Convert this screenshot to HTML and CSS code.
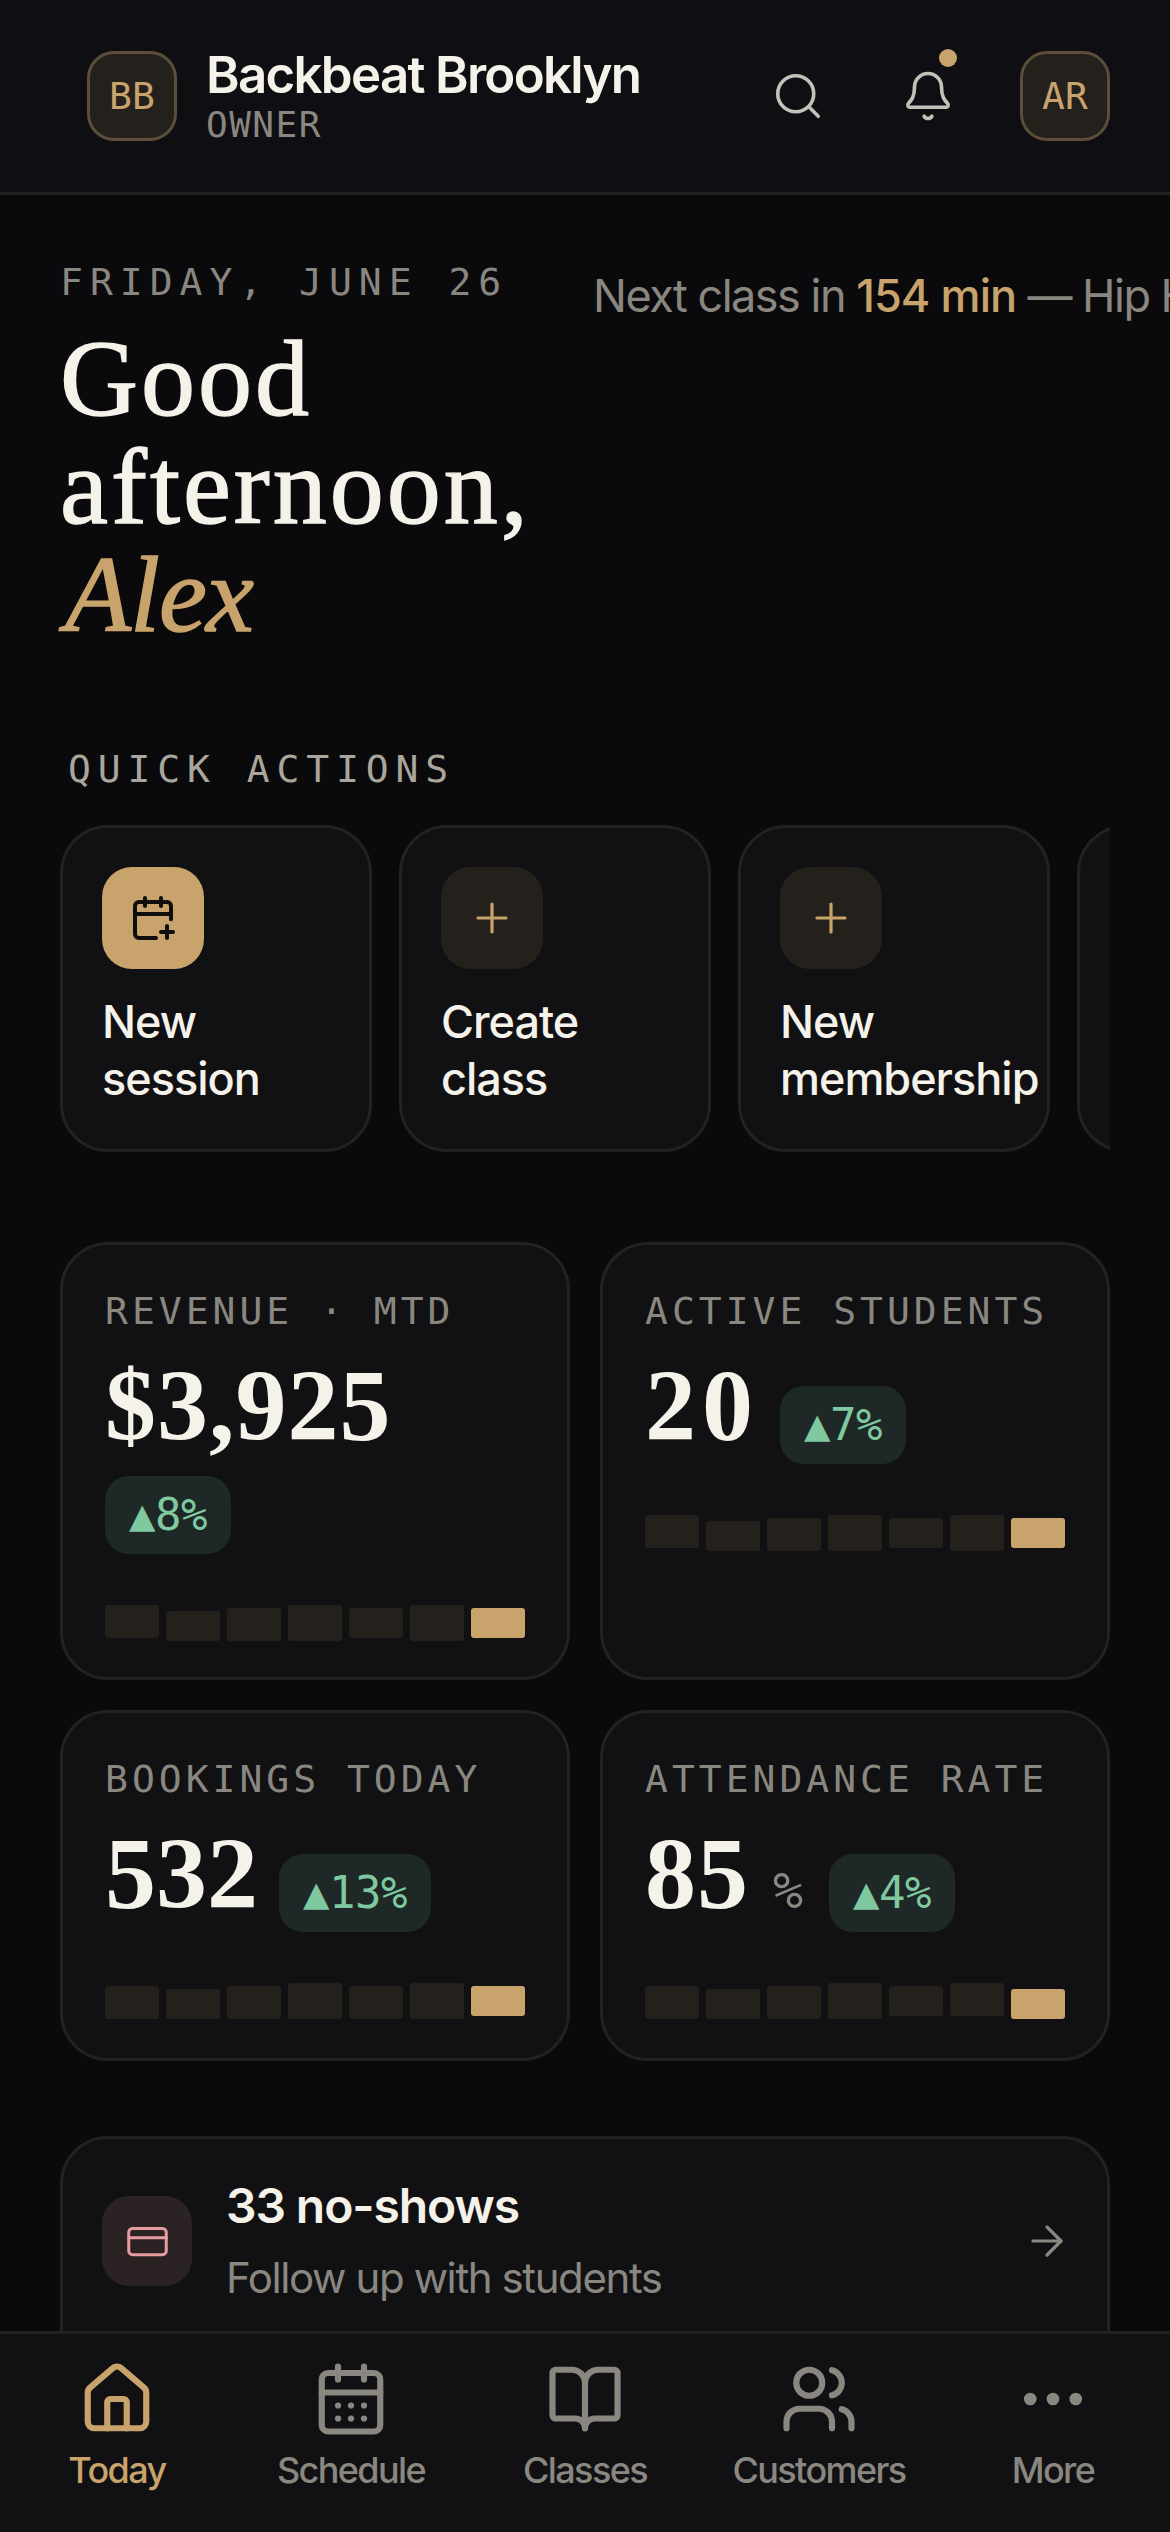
FILE: index.html
```html
<!DOCTYPE html>
<html lang="en">
<head>
<meta charset="utf-8">
<title>Backbeat Brooklyn</title>
<link rel="stylesheet" href="styles.css">
</head>
<body>
<div class="app">
  <header class="topbar">
    <div class="brand">
      <div class="avatar">BB</div>
      <div class="brand-text">
        <div class="brand-name">Backbeat Brooklyn</div>
        <div class="brand-role">OWNER</div>
      </div>
    </div>
    <div class="top-actions">
      <button class="icon-btn"><svg class="i54" viewBox="0 0 24 24"><circle cx="11" cy="11" r="8"/><path d="m21 21-4.3-4.3"/></svg></button>
      <button class="icon-btn bell"><svg class="i54" viewBox="0 0 24 24"><path d="M10.268 21a2 2 0 0 0 3.464 0"/><path d="M3.262 15.326A1 1 0 0 0 4 17h16a1 1 0 0 0 .74-1.673C19.41 13.956 18 12.499 18 8A6 6 0 0 0 6 8c0 4.499-1.411 5.956-2.738 7.326"/></svg><span class="dot"></span></button>
      <div class="avatar">AR</div>
    </div>
  </header>

  <main class="content">
    <section class="hero">
      <div class="greeting">
        <div class="date">FRIDAY, JUNE 26</div>
        <h1 class="headline">Good afternoon, <em>Alex</em></h1>
      </div>
      <div class="ticker">Next class in <b>154 min</b> — Hip Hop Foundations</div>
    </section>

    <h2 class="section-label">QUICK ACTIONS</h2>
    <div class="actions">
      <div class="action">
        <div class="action-icon primary"><svg class="i48 thick" viewBox="0 0 24 24"><path d="M16 19h6"/><path d="M16 2v4"/><path d="M19 16v6"/><path d="M21 12.598V6a2 2 0 0 0-2-2H5a2 2 0 0 0-2 2v14a2 2 0 0 0 2 2h8.5"/><path d="M3 10h18"/><path d="M8 2v4"/></svg></div>
        <div class="action-label">New session</div>
      </div>
      <div class="action">
        <div class="action-icon"><svg class="i48" viewBox="0 0 24 24"><path d="M5 12h14"/><path d="M12 5v14"/></svg></div>
        <div class="action-label">Create class</div>
      </div>
      <div class="action">
        <div class="action-icon"><svg class="i48" viewBox="0 0 24 24"><path d="M5 12h14"/><path d="M12 5v14"/></svg></div>
        <div class="action-label">New membership</div>
      </div>
      <div class="action"></div>
    </div>

    <div class="metrics">
      <article class="metric">
        <div class="metric-label">REVENUE · MTD</div>
        <div class="metric-row"><span class="metric-value">$3,925</span><span class="badge">▲8%</span></div>
        <div class="spark">
          <i style="height:33px;margin-top:0"></i><i style="height:30px;margin-top:6px"></i><i style="height:33px;margin-top:3px"></i><i style="height:36px;margin-top:0"></i><i style="height:30px;margin-top:3px"></i><i style="height:36px;margin-top:0"></i><i class="now" style="height:30px;margin-top:3px"></i>
        </div>
      </article>
      <article class="metric">
        <div class="metric-label">ACTIVE STUDENTS</div>
        <div class="metric-row"><span class="metric-value spaced">20</span><span class="badge">▲7%</span></div>
        <div class="spark">
          <i style="height:33px;margin-top:0"></i><i style="height:30px;margin-top:6px"></i><i style="height:33px;margin-top:3px"></i><i style="height:36px;margin-top:0"></i><i style="height:30px;margin-top:3px"></i><i style="height:36px;margin-top:0"></i><i class="now" style="height:30px;margin-top:3px"></i>
        </div>
      </article>
      <article class="metric">
        <div class="metric-label">BOOKINGS TODAY</div>
        <div class="metric-row"><span class="metric-value tight">532</span><span class="badge">▲13%</span></div>
        <div class="spark">
          <i style="height:33px;margin-top:3px"></i><i style="height:30px;margin-top:6px"></i><i style="height:33px;margin-top:3px"></i><i style="height:36px;margin-top:0"></i><i style="height:33px;margin-top:3px"></i><i style="height:36px;margin-top:0"></i><i class="now" style="height:30px;margin-top:3px"></i>
        </div>
      </article>
      <article class="metric">
        <div class="metric-label">ATTENDANCE RATE</div>
        <div class="metric-row"><span class="metric-value">85</span><span class="unit">%</span><span class="badge">▲4%</span></div>
        <div class="spark">
          <i style="height:33px;margin-top:3px"></i><i style="height:30px;margin-top:6px"></i><i style="height:33px;margin-top:3px"></i><i style="height:36px;margin-top:0"></i><i style="height:30px;margin-top:3px"></i><i style="height:33px;margin-top:0"></i><i class="now" style="height:30px;margin-top:6px"></i>
        </div>
      </article>
    </div>

    <article class="alert">
      <div class="alert-icon"><svg class="i45" viewBox="0 0 24 24"><rect width="20" height="14" x="2" y="5" rx="2"/><path d="M2 10h20"/></svg></div>
      <div class="alert-text">
        <div class="alert-title">33 no-shows</div>
        <div class="alert-sub">Follow up with students</div>
      </div>
      <svg class="i48 arrow" viewBox="0 0 24 24"><path d="M5 12h14"/><path d="m12 5 7 7-7 7"/></svg>
    </article>
  </main>

  <nav class="tabbar">
    <a class="tab active"><svg class="i78" viewBox="0 0 24 24"><path d="M15 21v-8a1 1 0 0 0-1-1h-4a1 1 0 0 0-1 1v8"/><path d="M3 10a2 2 0 0 1 .709-1.528l7-5.999a2 2 0 0 1 2.582 0l7 5.999A2 2 0 0 1 21 10v9a2 2 0 0 1-2 2H5a2 2 0 0 1-2-2z"/></svg><span>Today</span></a>
    <a class="tab"><svg class="i78" viewBox="0 0 24 24"><path d="M8 2v4"/><path d="M16 2v4"/><rect width="18" height="18" x="3" y="4" rx="2"/><path d="M3 10h18"/><path d="M8 14h.01"/><path d="M12 14h.01"/><path d="M16 14h.01"/><path d="M8 18h.01"/><path d="M12 18h.01"/><path d="M16 18h.01"/></svg><span>Schedule</span></a>
    <a class="tab"><svg class="i78" viewBox="0 0 24 24"><path d="M12 7v14"/><path d="M3 18a1 1 0 0 1-1-1V4a1 1 0 0 1 1-1h5a4 4 0 0 1 4 4 4 4 0 0 1 4-4h5a1 1 0 0 1 1 1v13a1 1 0 0 1-1 1h-6a3 3 0 0 0-3 3 3 3 0 0 0-3-3z"/></svg><span>Classes</span></a>
    <a class="tab"><svg class="i78" viewBox="0 0 24 24"><path d="M16 21v-2a4 4 0 0 0-4-4H6a4 4 0 0 0-4 4v2"/><circle cx="9" cy="7" r="4"/><path d="M22 21v-2a4 4 0 0 0-3-3.87"/><path d="M16 3.13a4 4 0 0 1 0 7.75"/></svg><span>Customers</span></a>
    <a class="tab"><svg class="i78" viewBox="0 0 24 24"><circle cx="12" cy="12" r="1"/><circle cx="19" cy="12" r="1"/><circle cx="5" cy="12" r="1"/></svg><span>More</span></a>
  </nav>
</div>
</body>
</html>
```

FILE: styles.css
```css
* { box-sizing: border-box; }
html, body { margin: 0; padding: 0; background: #0a0a0c; }
body { font-family: Inter, "Liberation Sans", sans-serif; color: #f5f2ea; }
svg { fill: none; stroke: currentColor; stroke-width: 1.6; stroke-linecap: round; stroke-linejoin: round; display: block; flex: none; }
.i54 { width: 54px; height: 54px; }
.i48 { width: 48px; height: 48px; }
.i45 { width: 45px; height: 45px; }
.i78 { width: 78px; height: 78px; stroke-width: 1.9; }
.thick { stroke-width: 2; }

.app { width: 1170px; height: 2532px; display: flex; flex-direction: column; overflow: hidden; }

.topbar { flex: none; height: 195px; padding: 51px 60px 0 87px; display: flex; justify-content: space-between; align-items: flex-start; background: #0f0f13; border-bottom: 3px solid #222225; }
.brand { display: flex; gap: 29px; }
.avatar { width: 90px; height: 90px; border-radius: 27px; background: #24201c; border: 3px solid #5c4e3a; color: #c9a36c; font-family: "DejaVu Sans Mono", monospace; font-size: 38px; display: flex; align-items: center; justify-content: center; }
.brand-text { margin-top: -6px; }
.brand-name { font-size: 51px; line-height: 60px; font-weight: 600; letter-spacing: -1.7px; }
.brand-role { font-family: "DejaVu Sans Mono", monospace; font-size: 36px; line-height: 40px; letter-spacing: 1.5px; color: #8a8781; }
.top-actions { display: flex; align-items: center; }
.icon-btn { position: relative; width: 54px; height: 54px; padding: 0; border: 0; background: none; color: #c4c1b9; margin-right: 76px; }
.bell { margin-right: 65px; }
.dot { position: absolute; left: 38px; top: -20px; width: 18px; height: 18px; border-radius: 50%; background: #c9a36c; }

.content { flex: 1; min-height: 0; padding: 0 0 0 60px; overflow: hidden; }
.hero { display: flex; white-space: nowrap; padding-top: 65px; }
.greeting { width: 533px; flex: none; }
.date { font-family: "DejaVu Sans Mono", monospace; font-size: 38px; line-height: 44px; letter-spacing: 7px; color: #8a8781; }
.headline { margin: 21px 0 0; font-family: "Liberation Serif", serif; font-weight: 400; font-size: 108px; line-height: 108px; letter-spacing: 3px; white-space: normal; width: 500px; -webkit-text-stroke: 1.4px #f5f2ea; }
.headline em { color: #c9a36c; -webkit-text-stroke-color: #c9a36c; letter-spacing: -1px; margin-left: 5px; }
.ticker { padding-top: 8px; font-size: 45px; letter-spacing: -1.5px; color: #8a8781; line-height: 56px; }
.ticker b { color: #c9a36c; font-weight: 500; letter-spacing: -0.9px; }

.section-label { margin: 98px 0 0 8px; font-family: "DejaVu Sans Mono", monospace; font-weight: 400; font-size: 38px; line-height: 44px; letter-spacing: 6.9px; color: #aaa69c; }
.actions { margin: 34px 60px 0 0; display: flex; gap: 27px; overflow: hidden; }
.action { flex: none; width: 312px; height: 327px; padding: 39px; border: 3px solid #222225; border-radius: 48px; background: #111113; }
.action-icon { width: 102px; height: 102px; border-radius: 30px; background: #24201c; color: #c9a36c; display: flex; align-items: center; justify-content: center; }
.action-icon.primary { background: #c9a36c; color: #0f0e0c; }
.action-label { margin-top: 24px; font-size: 45px; line-height: 57px; font-weight: 500; letter-spacing: -1px; width: 220px; }

.metrics { margin: 90px 60px 0 0; display: grid; grid-template-columns: 1fr 1fr; gap: 30px; }
.metric { padding: 44px 42px 36px; min-height: 351px; border: 3px solid #222225; border-radius: 48px; background: #111113; }
.metric-label { font-family: "DejaVu Sans Mono", monospace; font-size: 38px; line-height: 44px; letter-spacing: 4px; color: #8a8781; white-space: nowrap; }
.metric-row { display: flex; flex-wrap: wrap; align-items: baseline; column-gap: 21px; row-gap: 16px; margin-top: 19px; }
.metric-value { font-family: "Liberation Serif", serif; font-weight: 700; font-size: 102px; line-height: 108px; letter-spacing: 1px; }
.metric-value.spaced { letter-spacing: 6px; }
.metric-value.tight { letter-spacing: 0; }
.unit { font-family: "DejaVu Sans Mono", monospace; font-size: 50px; color: #8a8781; margin: 0 5px 0 3px; }
.badge { height: 78px; padding: 24px 24px 0; border-radius: 24px; background: #1e2826; color: #7fc8a0; font-family: "DejaVu Sans Mono", monospace; font-size: 44px; line-height: 30px; letter-spacing: -0.5px; }
.spark { margin-top: 51px; height: 36px; display: flex; gap: 7px; align-items: flex-start; }
.spark i { flex: 1; background: #24201c; border-radius: 3px; }
.spark i.now { background: #c9a36c; }

.alert { margin: 75px 60px 0 0; height: 300px; padding: 57px 42px 0 39px; border: 3px solid #222225; border-radius: 48px; background: #111113; display: flex; align-items: flex-start; gap: 34px; }
.alert-icon { width: 90px; height: 90px; border-radius: 27px; background: #2a2223; color: #e89ca0; display: flex; align-items: center; justify-content: center; flex: none; }
.alert-text { flex: 1; margin-top: -26px; }
.alert-title { font-size: 48px; line-height: 72px; font-weight: 600; letter-spacing: -1.1px; }
.alert-sub { font-size: 42px; line-height: 72px; color: #8a8781; letter-spacing: -1.4px; }
.arrow { color: #8a8781; margin: 21px -6px 0 0; }

.tabbar { flex: none; height: 201px; border-top: 3px solid #222225; background: #111113; display: flex; }
.tab { flex: 1; display: flex; flex-direction: column; align-items: center; color: #8a8781; padding-top: 26px; }
.tab span { font-size: 36px; line-height: 44px; font-weight: 500; letter-spacing: -1.6px; margin-top: 10px; }
.tab.active { color: #c9a36c; }
```
